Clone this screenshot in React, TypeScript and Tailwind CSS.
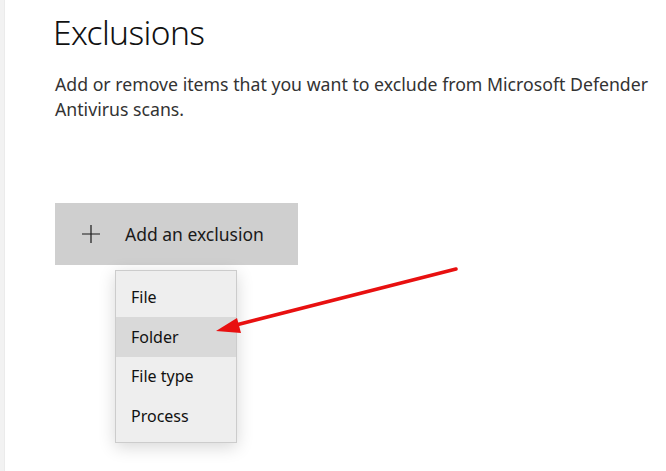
import React from "react";

const items = ["File", "Folder", "File type", "Process"];

function PlusIcon() {
  return (
    <svg width="18" height="18" viewBox="0 0 18 18" className="shrink-0">
      <path d="M9 0v18M0 9h18" stroke="#1a1a1a" strokeWidth="1.2" />
    </svg>
  );
}

function Arrow() {
  return (
    <svg
      className="absolute left-0 top-0 pointer-events-none"
      width="666"
      height="471"
      viewBox="0 0 666 471"
    >
      <line x1="456" y1="269" x2="232" y2="326" stroke="#e81010" strokeWidth="3.5" strokeLinecap="round" />
      <polygon points="216,331 237,318 241,333" fill="#e81010" />
    </svg>
  );
}

export default function App() {
  return (
    <div
      className="relative w-[666px] h-[471px] overflow-hidden bg-white flex"
      style={{ fontFamily: '"Noto Sans", "Open Sans", sans-serif' }}
    >
      <div className="w-[5px] h-full bg-[#f2f2f2] border-r border-[#ebebeb]" />
      <div className="flex flex-col pl-[48px] pt-[9px]">
        <h1 className="text-[33.5px] font-light leading-[46px] text-[#111] tracking-[-0.6px]">
          Exclusions
        </h1>
        <p className="ml-[2px] mt-[17px] w-[602px] text-[17.7px] leading-[25px] text-[#333]">
          Add or remove items that you want to exclude from Microsoft Defender Antivirus scans.
        </p>
        <button className="ml-[2px] mt-[81px] w-[243px] h-[62px] bg-[#cfcfcf] flex items-center gap-[25px] pl-[27px] text-[17.5px] text-[#1a1a1a]">
          <PlusIcon />
          <span>Add an exclusion</span>
        </button>
        <div className="ml-[62px] mt-[5px] w-[122px] h-[173px] bg-[#eeeeee] border border-[#cccccc] shadow-[0_4px_16px_rgba(0,0,0,0.16)] py-[6px] flex flex-col">
          {items.map((item) => (
            <div
              key={item}
              className={`h-[40px] flex items-center pl-[15px] text-[16px] text-[#111] ${
                item === "Folder" ? "bg-[#d9d9d9]" : ""
              }`}
            >
              {item}
            </div>
          ))}
        </div>
      </div>
      <Arrow />
    </div>
  );
}
